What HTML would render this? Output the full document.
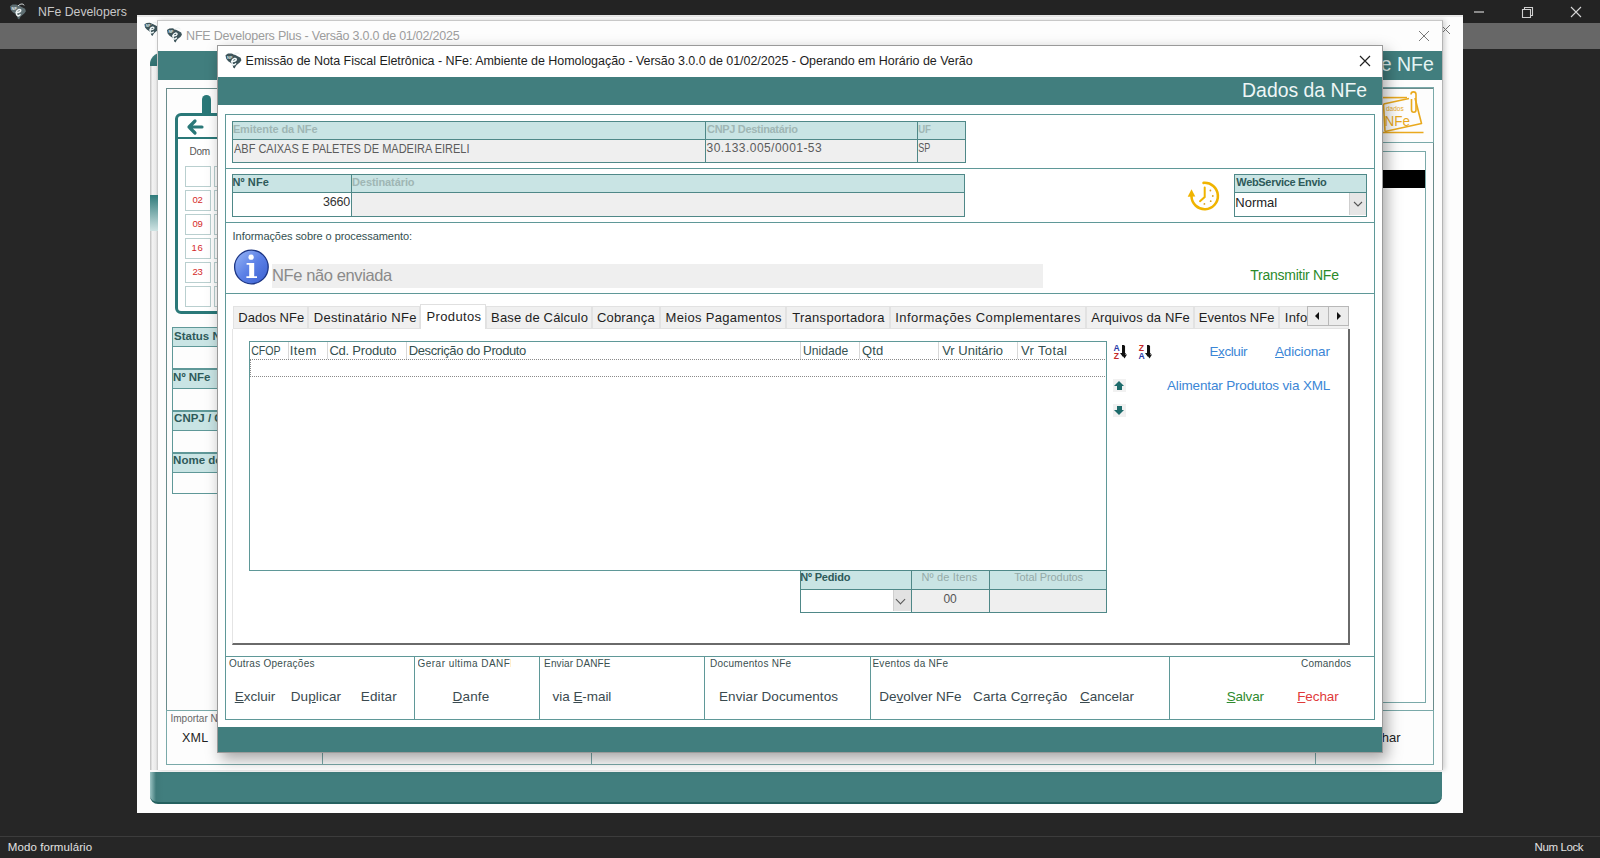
<!DOCTYPE html>
<html><head><meta charset="utf-8">
<style>
*{margin:0;padding:0;box-sizing:border-box}
html,body{width:1600px;height:858px;overflow:hidden;background:#262626;font-family:"Liberation Sans",sans-serif;position:relative}
.a{position:absolute}
.t{position:absolute;white-space:nowrap;line-height:1}
.teal{background:#417e7e}
.bx{position:absolute;border:1px solid #5f9a9a}
.hd{background:#c9e4e4}
.gr{background:#efefef}
</style></head><body>
<!-- top app bar -->
<div class="a" style="left:0;top:0;width:1600px;height:23px;background:#232323"></div>
<div class="a" style="left:0;top:23px;width:1600px;height:26px;background:#676767"></div>
<!-- status bar -->
<div class="a" style="left:0;top:836px;width:1600px;height:1px;background:#3c3c3c"></div>

<div class="t" style="left:37.60px;top:5.03px;font-size:13.5px;transform:scaleX(0.9094);transform-origin:1.00px 0;color:#c8c8c8">NFe Developers</div>
<div class="t" style="left:7.75px;top:842.23px;font-size:11.5px;letter-spacing:0.089px;color:#e2e2e2">Modo formulário</div>
<div class="t" style="left:1534.50px;top:842.23px;font-size:11.5px;letter-spacing:-0.393px;color:#e2e2e2">Num Lock</div>
<!-- outer window -->
<div class="a" style="left:137px;top:15px;width:1326px;height:798px;background:#fdfdfd"></div>


<!-- chrome icons -->
<svg class="a" style="left:8px;top:3px" width="20" height="17" viewBox="0 0 17 17"><path d="M0.5 3.2L3 1.6L6.5 1.4L9.5 2.6L12.2 4L15.6 5.8L16.4 8.2L14.8 10.6L12.6 12.2L11 13.8L9.6 16.4L8.2 15.4L7.6 12.8L5.6 10.8L3.2 9.2L1.2 6.8Z" fill="#5e6e72"/><path d="M6.6 9.6C7.6 6 11.6 5.6 11.2 7.8C10.8 9.4 8.4 9.4 7 9.6M7 10C6.6 12.8 8.6 13.8 10.6 11.8" stroke="#eef4f4" stroke-width="1.5" fill="none" stroke-linecap="round"/><path d="M8.5 3C10.5 0.6 14 0.4 14.6 2.4" stroke="#e9efef" stroke-width="1" fill="none"/><text x="2" y="6.5" font-size="4" font-family="Liberation Sans" font-weight="bold" fill="#dfe8e8">NF</text></svg>
<svg class="a" style="left:1473px;top:6px" width="110" height="12" viewBox="0 0 110 12"><path d="M1 6H11" stroke="#cfcfcf" stroke-width="1.2"/><path d="M49.5 3.5H57.5V11.5H49.5Z M51.5 3.5V1.5H59.5V9.5H57.5" stroke="#cfcfcf" stroke-width="1.1" fill="none"/><path d="M98 1L108 11M108 1L98 11" stroke="#d6d6d6" stroke-width="1.1"/></svg>
<div class="a" style="left:137px;top:15px;width:1326px;height:2px;background:#e8e8e8"></div>

<svg class="a" style="left:144px;top:21px" width="15" height="16" viewBox="0 0 17 17"><path d="M0.5 3.2L3 1.6L6.5 1.4L9.5 2.6L12.2 4L15.6 5.8L16.4 8.2L14.8 10.6L12.6 12.2L11 13.8L9.6 16.4L8.2 15.4L7.6 12.8L5.6 10.8L3.2 9.2L1.2 6.8Z" fill="#3d545a"/><path d="M6.6 9.6C7.6 6 11.6 5.6 11.2 7.8C10.8 9.4 8.4 9.4 7 9.6M7 10C6.6 12.8 8.6 13.8 10.6 11.8" stroke="#f4fbfb" stroke-width="1.5" fill="none" stroke-linecap="round"/><path d="M8.5 3C10.5 0.6 14 0.4 14.6 2.4" stroke="#e9efef" stroke-width="1" fill="none"/><text x="2" y="6.5" font-size="4" font-family="Liberation Sans" font-weight="bold" fill="#dfe8e8">NF</text></svg>
<svg class="a" style="left:1440px;top:24px" width="12" height="12" viewBox="0 0 12 12"><path d="M1 1L10 10M10 1L1 10" stroke="#777" stroke-width="1"/></svg>

<!-- rounded form behind -->
<div class="a" style="left:150px;top:52px;width:1292px;height:752px;background:#fbfbfb;border-radius:10px 0 10px 10px"></div>
<div class="a teal" style="left:150px;top:772px;width:1292px;height:32px;border-radius:0 0 8px 8px;border-bottom:2px solid #24605f;background:linear-gradient(90deg,#9cc4c4 0,#3f7a7a 6px,#417e7e 14px)"></div>
<div class="a teal" style="left:150px;top:53px;width:20px;height:13px;border-radius:11px 0 0 0;background:linear-gradient(180deg,#3f7d7d,#2f6f6f)"></div>

<!-- second window -->
<div class="a" style="left:157px;top:20px;width:1286px;height:750px;background:#fdfdfd;border-left:1px solid #c4c4c4;border-right:1px solid #b4b4b4;border-top:1px solid #c8c8c8;box-shadow:2px 0 5px rgba(0,0,0,.18)"></div>
<div class="a teal" style="left:158px;top:51px;width:1284px;height:29px"></div>


<!-- second window content -->
<div class="a" style="left:150px;top:66px;width:8px;height:704px;background:linear-gradient(90deg,#bdbdbd,#f2f2f2 30%,#e9e9e9 75%,#c4c4c4)"></div>
<div class="a" style="left:150px;top:195px;width:8px;height:36px;background:linear-gradient(180deg,#2f7a7a,#cfe3e3)"></div>
<div class="a" style="left:166px;top:88px;width:1268px;height:623px;border:1px solid #6a8c8c"></div>
<div class="a" style="left:166px;top:710px;width:1268px;height:55px;border:1px solid #7aa9a9"></div>
<div class="a" style="left:322px;top:710px;width:1px;height:55px;background:#7aa9a9"></div>
<div class="a" style="left:591px;top:710px;width:1px;height:55px;background:#7aa9a9"></div>
<div class="a" style="left:1315px;top:710px;width:1px;height:55px;background:#7aa9a9"></div>
<!-- logo box -->
<div class="a" style="left:1300px;top:87px;width:134px;height:56px;border:1px solid #7aa9a9"></div>
<div class="a" style="left:1300px;top:151px;width:126px;height:552px;border:1px solid #7aa9a9;background:linear-gradient(90deg,#dcdcdc,#fff 20%)"></div>
<div class="a" style="left:1300px;top:170px;width:125px;height:18px;background:#000"></div>
<!-- label boxes -->
<div class="a hd" style="left:172px;top:327px;width:60px;height:20px;border:1px solid #5f9898"></div>
<div class="a" style="left:172px;top:346px;width:60px;height:23px;border:1px solid #5f9898;border-top:none"></div>
<div class="a hd" style="left:172px;top:369px;width:60px;height:20px;border:1px solid #5f9898"></div>
<div class="a" style="left:172px;top:388px;width:60px;height:23px;border:1px solid #5f9898;border-top:none"></div>
<div class="a hd" style="left:172px;top:411px;width:60px;height:20px;border:1px solid #5f9898"></div>
<div class="a" style="left:172px;top:430px;width:60px;height:23px;border:1px solid #5f9898;border-top:none"></div>
<div class="a hd" style="left:172px;top:453px;width:60px;height:20px;border:1px solid #5f9898"></div>
<div class="a" style="left:172px;top:472px;width:60px;height:22px;border:1px solid #5f9898;border-top:none"></div>
<!-- calendar -->
<div class="a" style="left:202px;top:95px;width:9px;height:22px;background:#2a7878;border-radius:5px 5px 0 0"></div>
<div class="a" style="left:175px;top:113px;width:60px;height:201px;border:3px solid #2a7878;border-radius:6px;background:#fff"></div>
<div class="a" style="left:175px;top:137px;width:60px;height:2px;background:#2a7878"></div>
<svg class="a" style="left:184px;top:117px" width="22" height="20" viewBox="0 0 22 20"><path d="M18 10H5M11 4L5 10L11 16" stroke="#2a7878" stroke-width="3.2" fill="none" stroke-linecap="round" stroke-linejoin="round"/></svg>
<div class="a" style="left:185px;top:166px;width:26px;height:21px;border:1px solid #b9cfcf;background:#fff"></div>
<div class="a" style="left:214px;top:166px;width:10px;height:21px;border:1px solid #b9cfcf;background:#fff"></div>
<div class="a" style="left:185px;top:190px;width:26px;height:21px;border:1px solid #b9cfcf;background:#fff"></div>
<div class="a" style="left:214px;top:190px;width:10px;height:21px;border:1px solid #b9cfcf;background:#fff"></div>
<div class="a" style="left:185px;top:214px;width:26px;height:21px;border:1px solid #b9cfcf;background:#fff"></div>
<div class="a" style="left:214px;top:214px;width:10px;height:21px;border:1px solid #b9cfcf;background:#fff"></div>
<div class="a" style="left:185px;top:238px;width:26px;height:21px;border:1px solid #b9cfcf;background:#fff"></div>
<div class="a" style="left:214px;top:238px;width:10px;height:21px;border:1px solid #b9cfcf;background:#fff"></div>
<div class="a" style="left:185px;top:262px;width:26px;height:21px;border:1px solid #b9cfcf;background:#fff"></div>
<div class="a" style="left:214px;top:262px;width:10px;height:21px;border:1px solid #b9cfcf;background:#fff"></div>
<div class="a" style="left:185px;top:286px;width:26px;height:21px;border:1px solid #b9cfcf;background:#fff"></div>
<div class="a" style="left:214px;top:286px;width:10px;height:21px;border:1px solid #b9cfcf;background:#fff"></div>

<svg class="a" style="left:166px;top:27px" width="17" height="16" viewBox="0 0 17 17"><path d="M0.5 3.2L3 1.6L6.5 1.4L9.5 2.6L12.2 4L15.6 5.8L16.4 8.2L14.8 10.6L12.6 12.2L11 13.8L9.6 16.4L8.2 15.4L7.6 12.8L5.6 10.8L3.2 9.2L1.2 6.8Z" fill="#3d545a"/><path d="M6.6 9.6C7.6 6 11.6 5.6 11.2 7.8C10.8 9.4 8.4 9.4 7 9.6M7 10C6.6 12.8 8.6 13.8 10.6 11.8" stroke="#f4fbfb" stroke-width="1.5" fill="none" stroke-linecap="round"/><path d="M8.5 3C10.5 0.6 14 0.4 14.6 2.4" stroke="#e9efef" stroke-width="1" fill="none"/><text x="2" y="6.5" font-size="4" font-family="Liberation Sans" font-weight="bold" fill="#dfe8e8">NF</text></svg>
<svg class="a" style="left:1418px;top:30px" width="12" height="12" viewBox="0 0 12 12"><path d="M1 1L11 11M11 1L1 11" stroke="#7a7a7a" stroke-width="1"/></svg>
<svg class="a" style="left:1380px;top:85px" width="50" height="55" viewBox="0 0 50 55"><g stroke="#e9a91e" stroke-width="1.6" fill="none" stroke-linejoin="round"><path d="M3 12.6H27"/><path d="M3.5 19L29 13.5"/><path d="M35 13L41.5 38.5L5 46.5"/><path d="M3 47.5H43.5"/><path d="M3.5 19L5 46.5"/><path d="M31 9.5C31 6 36 6 36 9.5V25C36 28 31.5 28 31.5 25V14"/></g><text x="6" y="26" font-size="6.5" font-family="Liberation Sans" fill="#e9a91e">dados</text><text x="5" y="41" font-size="15" font-family="Liberation Sans" fill="#e9a91e" transform="scale(0.9 1)">NFe</text></svg>

<div class="t" style="left:186.10px;top:29.77px;font-size:12.5px;letter-spacing:-0.226px;color:#9e9e9e">NFE Developers Plus - Versão 3.0.0 de 01/02/2025</div>
<div class="t" style="left:1289.60px;top:55.42px;font-size:19.5px;letter-spacing:0.000px;color:#e4f4f4">Emissão de NFe</div>
<div class="t" style="left:170.50px;top:713.50px;font-size:10px;letter-spacing:0.000px;color:#666">Importar NFe</div>
<div class="t" style="left:182.00px;top:731.58px;font-size:12.5px;letter-spacing:0.200px;color:#222">XML</div>
<div class="t" style="left:1360.00px;top:730.95px;font-size:13px;letter-spacing:0.000px;color:#222">Fechar</div>
<div class="t" style="left:174.10px;top:330.53px;font-size:11.5px;letter-spacing:0.000px;font-weight:bold;color:#2e5a5a">Status NFe</div>
<div class="t" style="left:173.10px;top:371.73px;font-size:11.5px;letter-spacing:0.000px;font-weight:bold;color:#2e5a5a">Nº NFe</div>
<div class="t" style="left:174.10px;top:413.23px;font-size:11.5px;letter-spacing:0.000px;font-weight:bold;color:#2e5a5a">CNPJ / CPF</div>
<div class="t" style="left:173.10px;top:455.12px;font-size:11.5px;letter-spacing:0.000px;font-weight:bold;color:#2e5a5a">Nome do Destinatário</div>
<div class="t" style="left:189.60px;top:146.50px;font-size:10px;letter-spacing:-0.300px;color:#555">Dom</div>
<div class="t" style="left:192.50px;top:194.93px;font-size:9.5px;letter-spacing:-0.200px;color:#d42a2a">02</div>
<div class="t" style="left:192.50px;top:218.93px;font-size:9.5px;letter-spacing:-0.200px;color:#d42a2a">09</div>
<div class="t" style="left:191.50px;top:242.93px;font-size:9.5px;letter-spacing:0.800px;color:#d42a2a">16</div>
<div class="t" style="left:192.50px;top:266.93px;font-size:9.5px;letter-spacing:-0.200px;color:#d42a2a">23</div>
<!-- inner dialog -->
<div class="a" style="left:217px;top:45px;width:1166px;height:708px;background:#fff;border:1px solid #9a9a9a;box-shadow:4px 6px 14px rgba(0,0,0,.35)"></div>
<div class="a teal" style="left:218px;top:77px;width:1164px;height:28px"></div>

<svg class="a" style="left:225px;top:52px" width="17" height="17" viewBox="0 0 17 17"><path d="M0.5 3.2L3 1.6L6.5 1.4L9.5 2.6L12.2 4L15.6 5.8L16.4 8.2L14.8 10.6L12.6 12.2L11 13.8L9.6 16.4L8.2 15.4L7.6 12.8L5.6 10.8L3.2 9.2L1.2 6.8Z" fill="#3d545a"/><path d="M6.6 9.6C7.6 6 11.6 5.6 11.2 7.8C10.8 9.4 8.4 9.4 7 9.6M7 10C6.6 12.8 8.6 13.8 10.6 11.8" stroke="#f4fbfb" stroke-width="1.5" fill="none" stroke-linecap="round"/><path d="M8.5 3C10.5 0.6 14 0.4 14.6 2.4" stroke="#e9efef" stroke-width="1" fill="none"/><text x="2" y="6.5" font-size="4" font-family="Liberation Sans" font-weight="bold" fill="#dfe8e8">NF</text></svg>
<svg class="a" style="left:1359px;top:55px" width="12" height="12" viewBox="0 0 12 12"><path d="M1 1L11 11M11 1L1 11" stroke="#222" stroke-width="1.2"/></svg>
<svg class="a" style="left:1187px;top:181px" width="33" height="30" viewBox="-3 0 33 30"><g stroke="#f0b400" fill="none" stroke-linecap="round"><path d="M13.55 1.85A13.2 13.2 0 1 1 1.5 15.5" stroke-width="2.6"/><path d="M14.7 6.6V16L10 20.2" stroke-width="2"/></g><path d="M1.5 8.2L-2.3 15.8L5.3 15.4Z" fill="#f0b400"/><g fill="#d9a020"><circle cx="20.4" cy="9.5" r="0.9"/><circle cx="22.8" cy="15" r="0.9"/><circle cx="20.7" cy="20.2" r="0.9"/><circle cx="14.4" cy="22.9" r="0.9"/></g></svg>

<!-- inner frame -->
<div class="bx" style="left:225px;top:114px;width:1150px;height:606px;border-color:#5f9898"></div>
<div class="a" style="left:225px;top:168px;width:1150px;height:1px;background:#5f9898"></div>
<div class="a" style="left:225px;top:222px;width:1150px;height:1px;background:#5f9898"></div>
<div class="a" style="left:225px;top:293px;width:1150px;height:1px;background:#5f9898"></div>
<div class="a" style="left:225px;top:656px;width:1150px;height:1px;background:#5f9898"></div>

<!-- Emitente table -->
<div class="a hd" style="left:232px;top:121px;width:734px;height:18px"></div>
<div class="a gr" style="left:232px;top:139px;width:734px;height:23px"></div>
<div class="bx" style="left:232px;top:121px;width:734px;height:42px;border-color:#4f8888"></div>
<div class="a" style="left:232px;top:139px;width:734px;height:1px;background:#4f8888"></div>
<div class="a" style="left:705px;top:121px;width:1px;height:42px;background:#4f8888"></div>
<div class="a" style="left:917px;top:121px;width:1px;height:42px;background:#4f8888"></div>

<!-- NFe table -->
<div class="a hd" style="left:232px;top:174px;width:733px;height:19px"></div>
<div class="a" style="left:232px;top:193px;width:119px;height:23px;background:#fff"></div>
<div class="a gr" style="left:351px;top:193px;width:614px;height:23px"></div>
<div class="bx" style="left:232px;top:174px;width:733px;height:43px;border-color:#4f8888"></div>
<div class="a" style="left:232px;top:192px;width:733px;height:1px;background:#4f8888"></div>
<div class="a" style="left:351px;top:174px;width:1px;height:43px;background:#4f8888"></div>

<!-- WebService -->
<div class="a hd" style="left:1234px;top:174px;width:133px;height:18px"></div>
<div class="a" style="left:1234px;top:192px;width:133px;height:24px;background:#fff"></div>
<div class="a" style="left:1349px;top:193px;width:17px;height:22px;background:#e6e6e6;border-left:1px solid #cfcfcf"></div>
<div class="bx" style="left:1234px;top:174px;width:133px;height:43px;border-color:#4f8888"></div>
<div class="a" style="left:1234px;top:192px;width:133px;height:1px;background:#4f8888"></div>

<!-- info -->
<div class="a gr" style="left:272px;top:264px;width:771px;height:24px"></div>
<svg class="a" style="left:233px;top:249px" width="37" height="37" viewBox="0 0 37 37"><defs><linearGradient id="ig" x1="0" y1="0" x2="1" y2="1"><stop offset="0" stop-color="#9ab8f6"/><stop offset="0.5" stop-color="#5b80e6"/><stop offset="1" stop-color="#3a5fcf"/></linearGradient></defs><circle cx="18.4" cy="18" r="16.8" fill="url(#ig)" stroke="#1c3584" stroke-width="1.3"/><circle cx="18.1" cy="8.2" r="2.6" fill="#fff"/><path d="M13.6 14H21.2V27.3H24V29H13.4V27.3H16.2V15.8H13.6Z" fill="#fff"/></svg>

<!-- tab page -->
<div class="a" style="left:232px;top:329px;width:1118px;height:316px;background:#fff;border-left:1px solid #e4e4e4;border-right:2px solid #6a6a6a;border-bottom:2px solid #6a6a6a"></div>
<div class="a" style="left:233px;top:306px;width:1075px;height:23px">
<div class="a" style="left:0px;top:0;width:75px;height:23px;background:#f0f0f0;border:1px solid #e2e2e2"></div>
<div class="a" style="left:75px;top:0;width:112px;height:23px;background:#f0f0f0;border:1px solid #e2e2e2"></div>
<div class="a" style="left:187px;top:-2px;width:66px;height:25px;background:#fff;border:1px solid #e0e0e0;border-bottom:none"></div>
<div class="a" style="left:253px;top:0;width:106px;height:23px;background:#f0f0f0;border:1px solid #e2e2e2"></div>
<div class="a" style="left:359px;top:0;width:68px;height:23px;background:#f0f0f0;border:1px solid #e2e2e2"></div>
<div class="a" style="left:427px;top:0;width:126px;height:23px;background:#f0f0f0;border:1px solid #e2e2e2"></div>
<div class="a" style="left:553px;top:0;width:104px;height:23px;background:#f0f0f0;border:1px solid #e2e2e2"></div>
<div class="a" style="left:657px;top:0;width:196px;height:23px;background:#f0f0f0;border:1px solid #e2e2e2"></div>
<div class="a" style="left:853px;top:0;width:108px;height:23px;background:#f0f0f0;border:1px solid #e2e2e2"></div>
<div class="a" style="left:961px;top:0;width:85px;height:23px;background:#f0f0f0;border:1px solid #e2e2e2"></div>
<div class="a" style="left:1046px;top:0;width:70px;height:23px;background:#f0f0f0;border:1px solid #e2e2e2"></div>
</div>
<div class="a" style="left:1307px;top:306px;width:42px;height:20px;background:#ececec;border:1px solid #b8b8b8"></div>
<div class="a" style="left:1328px;top:306px;width:1px;height:20px;background:#b8b8b8"></div>
<div class="a" style="left:1315px;top:312px;width:0;height:0;border-top:4px solid transparent;border-bottom:4px solid transparent;border-right:4px solid #111"></div>
<div class="a" style="left:1337px;top:312px;width:0;height:0;border-top:4px solid transparent;border-bottom:4px solid transparent;border-left:4px solid #111"></div>
<!-- grid -->
<div class="bx" style="left:249px;top:341px;width:858px;height:230px;border-color:#5f9898;background:#fff"></div>
<div class="a" style="left:250px;top:359px;width:856px;height:1px;background:repeating-linear-gradient(90deg,#8a8a8a 0 1px,transparent 1px 2px)"></div>
<div class="a" style="left:250px;top:376px;width:856px;height:1px;background:repeating-linear-gradient(90deg,#8a8a8a 0 1px,transparent 1px 2px)"></div>
<div class="a" style="left:250px;top:360px;width:1px;height:16px;background:repeating-linear-gradient(180deg,#8a8a8a 0 1px,transparent 1px 2px)"></div>
<div class="a" style="left:288px;top:342px;width:1px;height:17px;background:#d8d8d8"></div>
<div class="a" style="left:327px;top:342px;width:1px;height:17px;background:#d8d8d8"></div>
<div class="a" style="left:406px;top:342px;width:1px;height:17px;background:#d8d8d8"></div>
<div class="a" style="left:800px;top:342px;width:1px;height:17px;background:#d8d8d8"></div>
<div class="a" style="left:859px;top:342px;width:1px;height:17px;background:#d8d8d8"></div>
<div class="a" style="left:938px;top:342px;width:1px;height:17px;background:#d8d8d8"></div>
<div class="a" style="left:1017px;top:342px;width:1px;height:17px;background:#d8d8d8"></div>

<!-- sort icons -->
<div class="a" style="left:1122px;top:345px;width:1.5px;height:11px;background:#111"></div>
<div class="a" style="left:1120px;top:353px;width:0;height:0;border-left:3px solid transparent;border-right:3px solid transparent;border-top:4px solid #111"></div>
<div class="a" style="left:1147px;top:345px;width:1.5px;height:11px;background:#111"></div>
<div class="a" style="left:1145px;top:353px;width:0;height:0;border-left:3px solid transparent;border-right:3px solid transparent;border-top:4px solid #111"></div>
<svg class="a" style="left:1112px;top:344px" width="42" height="16" viewBox="0 0 42 16"><g font-family="Liberation Sans" font-weight="bold" font-size="8.6"><text x="1.6" y="7.4" fill="#2a3aa8">A</text><text x="1.8" y="14.6" fill="#c42a2a">Z</text><text x="26.8" y="7.4" fill="#c42a2a">Z</text><text x="26.6" y="14.6" fill="#2a3aa8">A</text></g><g stroke="#111" stroke-width="1.1"><path d="M12.5 1.5V12"/><path d="M37.5 1.5V12"/></g><path d="M10 10.6H15L12.5 14.6Z M35 10.6H40L37.5 14.6Z" fill="#111"/></svg>
<svg class="a" style="left:1352px;top:200px" width="12" height="8" viewBox="0 0 12 8"><path d="M2 2L6 6L10 2" stroke="#555" stroke-width="1.1" fill="none"/></svg>
<!-- arrows -->
<div class="a" style="left:1113px;top:379px;width:13px;height:13px;background:#f1f1f1"></div>
<div class="a" style="left:1114px;top:381px;width:0;height:0;border-left:5px solid transparent;border-right:5px solid transparent;border-bottom:5px solid #1d6b6b"></div>
<div class="a" style="left:1117px;top:386px;width:5px;height:4px;background:#1d6b6b"></div>
<div class="a" style="left:1113px;top:404px;width:13px;height:13px;background:#f1f1f1"></div>
<div class="a" style="left:1117px;top:406px;width:5px;height:4px;background:#1d6b6b"></div>
<div class="a" style="left:1114px;top:410px;width:0;height:0;border-left:5px solid transparent;border-right:5px solid transparent;border-top:5px solid #1d6b6b"></div>
<!-- links -->

<!-- fields under grid -->
<div class="a hd" style="left:800px;top:570px;width:306px;height:19px"></div>
<div class="a" style="left:800px;top:589px;width:111px;height:23px;background:#fff"></div>
<div class="a gr" style="left:911px;top:589px;width:195px;height:23px"></div>
<div class="a" style="left:893px;top:590px;width:18px;height:21px;background:#e2e2e2;border-left:1px solid #cfcfcf"></div>
<div class="bx" style="left:800px;top:570px;width:307px;height:43px;border-color:#4f8888"></div>
<div class="a" style="left:800px;top:589px;width:307px;height:1px;background:#4f8888"></div>
<div class="a" style="left:911px;top:570px;width:1px;height:43px;background:#4f8888"></div>
<div class="a" style="left:989px;top:570px;width:1px;height:43px;background:#4f8888"></div>
<div class="a" style="left:897px;top:596px;width:7px;height:7px;border-right:1px solid #555;border-bottom:1px solid #555;transform:rotate(45deg)"></div>

<!-- bottom command panel dividers -->
<div class="a" style="left:414px;top:656px;width:1px;height:63px;background:#5f9898"></div>
<div class="a" style="left:539px;top:656px;width:1px;height:63px;background:#5f9898"></div>
<div class="a" style="left:704px;top:656px;width:1px;height:63px;background:#5f9898"></div>
<div class="a" style="left:870px;top:656px;width:1px;height:63px;background:#5f9898"></div>
<div class="a" style="left:1169px;top:656px;width:1px;height:63px;background:#5f9898"></div>

<div class="t" style="left:245.60px;top:54.88px;font-size:12.5px;letter-spacing:-0.043px;color:#1e1e1e">Emissão de Nota Fiscal Eletrônica - NFe: Ambiente de Homologação - Versão 3.0.0 de 01/02/2025 - Operando em Horário de Verão</div>
<div class="t" style="left:1242.00px;top:79.78px;font-size:20.5px;transform:scaleX(0.9457);transform-origin:2.00px 0;color:#eef6f6">Dados da NFe</div>
<div class="t" style="left:232.90px;top:123.85px;font-size:11px;letter-spacing:-0.107px;font-weight:bold;color:#9fb6b4">Emitente da NFe</div>
<div class="t" style="left:707.10px;top:123.85px;font-size:11px;letter-spacing:-0.325px;font-weight:bold;color:#9fb6b4">CNPJ Destinatário</div>
<div class="t" style="left:918.00px;top:123.85px;font-size:11px;transform:scaleX(0.8714);transform-origin:1.00px 0;font-weight:bold;color:#9fb6b4">UF</div>
<div class="t" style="left:233.90px;top:142.50px;font-size:12px;transform:scaleX(0.9156);transform-origin:0.00px 0;color:#5b5b5b">ABF CAIXAS E PALETES DE MADEIRA EIRELI</div>
<div class="t" style="left:706.60px;top:142.40px;font-size:12px;letter-spacing:0.447px;color:#5b5b5b">30.133.005/0001-53</div>
<div class="t" style="left:918.00px;top:142.40px;font-size:12px;transform:scaleX(0.7533);transform-origin:1.00px 0;color:#5b5b5b">SP</div>
<div class="t" style="left:232.60px;top:176.90px;font-size:11px;letter-spacing:0.080px;font-weight:bold;color:#2e5a5a">Nº NFe</div>
<div class="t" style="left:352.00px;top:176.90px;font-size:11px;letter-spacing:-0.091px;font-weight:bold;color:#9fb6b4">Destinatário</div>
<div class="t" style="left:323.00px;top:195.62px;font-size:12.5px;letter-spacing:-0.167px;color:#333">3660</div>
<div class="t" style="left:1236.30px;top:177.45px;font-size:11px;letter-spacing:-0.320px;font-weight:bold;color:#2e5a5a">WebService Envio</div>
<div class="t" style="left:1235.30px;top:195.65px;font-size:13px;letter-spacing:-0.020px;color:#222">Normal</div>
<div class="t" style="left:232.60px;top:231.25px;font-size:11px;letter-spacing:-0.064px;color:#34504f">Informações sobre o processamento:</div>
<div class="t" style="left:272.00px;top:267.23px;font-size:16.5px;letter-spacing:-0.393px;color:#8a8a8a">NFe não enviada</div>
<div class="t" style="left:1250.30px;top:267.50px;font-size:14px;letter-spacing:-0.262px;color:#2a8a2a">Transmitir NFe</div>
<div class="t" style="left:238.30px;top:310.85px;font-size:13px;letter-spacing:0.012px;color:#1e1e1e">Dados NFe</div>
<div class="t" style="left:313.70px;top:310.85px;font-size:13px;letter-spacing:0.353px;color:#1e1e1e">Destinatário NFe</div>
<div class="t" style="left:491.10px;top:310.85px;font-size:13px;letter-spacing:0.150px;color:#1e1e1e">Base de Cálculo</div>
<div class="t" style="left:596.90px;top:310.85px;font-size:13px;letter-spacing:0.200px;color:#1e1e1e">Cobrança</div>
<div class="t" style="left:665.50px;top:310.85px;font-size:13px;letter-spacing:0.320px;color:#1e1e1e">Meios Pagamentos</div>
<div class="t" style="left:792.20px;top:310.85px;font-size:13px;letter-spacing:0.292px;color:#1e1e1e">Transportadora</div>
<div class="t" style="left:895.30px;top:310.85px;font-size:13px;letter-spacing:0.440px;color:#1e1e1e">Informações Complementares</div>
<div class="t" style="left:1091.25px;top:310.85px;font-size:13px;letter-spacing:0.118px;color:#1e1e1e">Arquivos da NFe</div>
<div class="t" style="left:1198.80px;top:310.85px;font-size:13px;letter-spacing:0.060px;color:#1e1e1e">Eventos NFe</div>
<div class="t" style="left:426.40px;top:309.55px;font-size:13px;letter-spacing:0.386px;color:#1e1e1e">Produtos</div>
<div class="a" style="left:1284.80px;top:308.85px;width:22.20px;height:19px;overflow:hidden"><div class="t" style="left:0;top:2px;font-size:13px;letter-spacing:0.233px;color:#1e1e1e">Informações</div></div>
<div class="t" style="left:251.00px;top:343.75px;font-size:13px;transform:scaleX(0.8171);transform-origin:1.00px 0;color:#35504f">CFOP</div>
<div class="t" style="left:289.70px;top:343.75px;font-size:13px;letter-spacing:0.433px;color:#35504f">Item</div>
<div class="t" style="left:329.40px;top:343.75px;font-size:13px;letter-spacing:-0.220px;color:#35504f">Cd. Produto</div>
<div class="t" style="left:408.70px;top:343.75px;font-size:13px;letter-spacing:-0.389px;color:#35504f">Descrição do Produto</div>
<div class="t" style="left:803.00px;top:343.75px;font-size:13px;transform:scaleX(0.9340);transform-origin:1.00px 0;color:#35504f">Unidade</div>
<div class="t" style="left:861.90px;top:343.75px;font-size:13px;letter-spacing:0.150px;color:#35504f">Qtd</div>
<div class="t" style="left:942.20px;top:343.75px;font-size:13px;letter-spacing:-0.010px;color:#35504f">Vr Unitário</div>
<div class="t" style="left:1021.00px;top:343.75px;font-size:13px;letter-spacing:0.357px;color:#35504f">Vr Total</div>
<div class="t" style="left:1209.50px;top:344.82px;font-size:13.5px;letter-spacing:-0.417px;color:#3b86d6">E<u>x</u>cluir</div>
<div class="t" style="left:1275.00px;top:344.82px;font-size:13.5px;letter-spacing:-0.175px;color:#3b86d6"><u>A</u>dicionar</div>
<div class="t" style="left:1167.00px;top:378.52px;font-size:13.5px;letter-spacing:-0.160px;color:#3b86d6">Alimentar Produtos via XML</div>
<div class="t" style="left:800.25px;top:572.05px;font-size:11px;letter-spacing:-0.194px;font-weight:bold;color:#2e5a5a">Nº Pedido</div>
<div class="t" style="left:921.40px;top:572.05px;font-size:11px;letter-spacing:0.180px;color:#94aaa8">Nº de Itens</div>
<div class="t" style="left:1014.20px;top:572.05px;font-size:11px;letter-spacing:-0.108px;color:#94aaa8">Total Produtos</div>
<div class="t" style="left:943.60px;top:592.90px;font-size:12px;letter-spacing:-0.200px;color:#555">00</div>
<div class="t" style="left:228.90px;top:659.30px;font-size:10px;letter-spacing:0.257px;color:#3a4f4f">Outras Operações</div>
<div class="t" style="left:544.10px;top:659.30px;font-size:10px;letter-spacing:0.118px;color:#3a4f4f">Enviar DANFE</div>
<div class="t" style="left:710.00px;top:659.30px;font-size:10px;letter-spacing:0.250px;color:#3a4f4f">Documentos NFe</div>
<div class="t" style="left:872.40px;top:659.30px;font-size:10px;letter-spacing:0.308px;color:#3a4f4f">Eventos da NFe</div>
<div class="t" style="left:1301.10px;top:659.30px;font-size:10px;letter-spacing:0.214px;color:#3a4f4f">Comandos</div>
<div class="a" style="left:417.60px;top:657.30px;width:93.40px;height:16px;overflow:hidden"><div class="t" style="left:0;top:2px;font-size:10px;letter-spacing:0.450px;color:#3a4f4f">Gerar ultima DANFE</div></div>
<div class="t" style="left:234.75px;top:689.92px;font-size:13.5px;letter-spacing:0.000px;color:#3a4a4f"><u>E</u>xcluir</div>
<div class="t" style="left:290.75px;top:689.92px;font-size:13.5px;letter-spacing:0.107px;color:#3a4a4f">Du<u>p</u>licar</div>
<div class="t" style="left:360.75px;top:689.92px;font-size:13.5px;letter-spacing:0.130px;color:#3a4a4f">Editar</div>
<div class="t" style="left:452.60px;top:689.92px;font-size:13.5px;letter-spacing:0.162px;color:#3a4a4f"><u>D</u>anfe</div>
<div class="t" style="left:552.60px;top:689.92px;font-size:13.5px;letter-spacing:-0.056px;color:#3a4a4f">via <u>E</u>-mail</div>
<div class="t" style="left:719.00px;top:689.92px;font-size:13.5px;letter-spacing:0.075px;color:#3a4a4f">Enviar Documentos</div>
<div class="t" style="left:879.30px;top:689.92px;font-size:13.5px;letter-spacing:-0.027px;color:#3a4a4f">De<u>v</u>olver NFe</div>
<div class="t" style="left:973.00px;top:689.92px;font-size:13.5px;letter-spacing:0.154px;color:#3a4a4f">Carta C<u>o</u>rreção</div>
<div class="t" style="left:1080.00px;top:689.92px;font-size:13.5px;letter-spacing:-0.014px;color:#3a4a4f"><u>C</u>ancelar</div>
<div class="t" style="left:1226.70px;top:689.92px;font-size:13.5px;letter-spacing:-0.200px;color:#2e8a2e"><u>S</u>alvar</div>
<div class="t" style="left:1297.20px;top:689.92px;font-size:13.5px;letter-spacing:-0.100px;color:#e03a3a"><u>F</u>echar</div>
<div class="a teal" style="left:218px;top:727px;width:1164px;height:25px"></div>

</body></html>
